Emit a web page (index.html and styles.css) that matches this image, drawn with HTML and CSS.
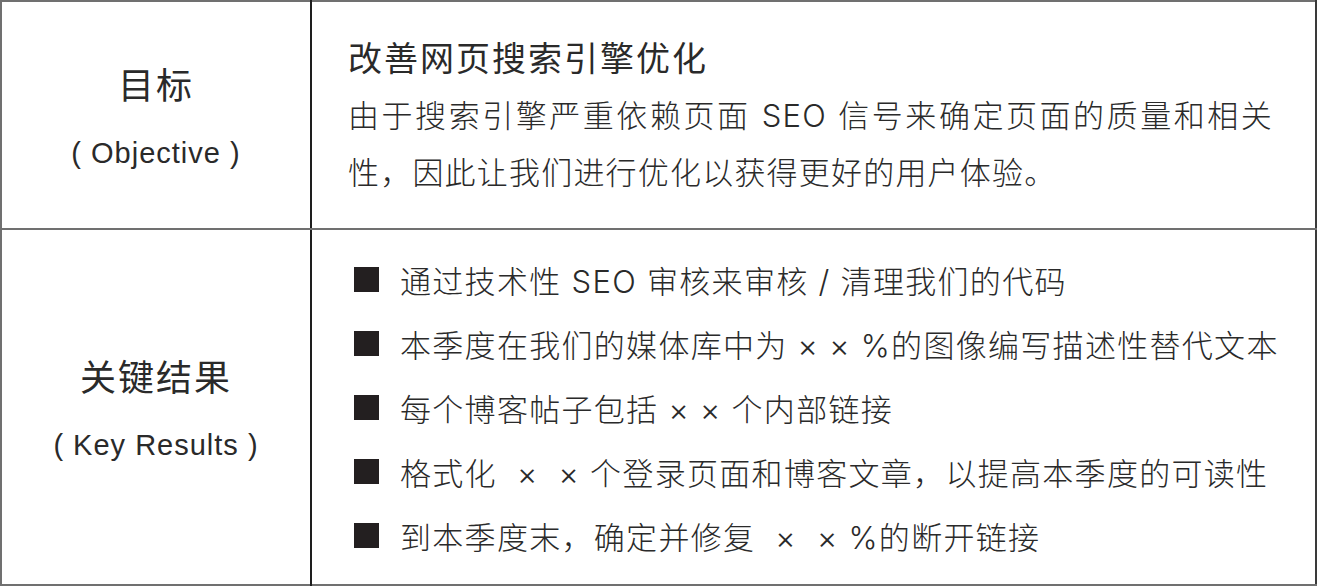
FILE: index.html
```html
<!DOCTYPE html>
<html lang="zh-CN">

<head>
    <meta charset="UTF-8">
    <meta name="viewport" content="width=device-width, initial-scale=1.0">
    <title>OKR 示例</title>
    <link rel="stylesheet" href="styles.css">
</head>

<body>
    <table class="okr">
        <colgroup>
            <col class="okr-col-label">
            <col>
        </colgroup>

        <!-- 目标 -->
        <tr class="okr-row-objective">
            <th class="okr-label">
                <div class="okr-label-title">目标</div>
                <div class="okr-label-sub">( Objective )</div>
            </th>
            <td class="okr-body">
                <div class="okr-objective">
                    <h2 class="okr-title">改善网页搜索引擎优化</h2>
                    <p class="okr-text">由于搜索引擎严重依赖页面 SEO 信号来确定页面的质量和相关性，因此让我们进行优化以获得更好的用户体验。</p>
                </div>
            </td>
        </tr>

        <!-- 关键结果 -->
        <tr class="okr-row-results">
            <th class="okr-label">
                <div class="okr-label-title">关键结果</div>
                <div class="okr-label-sub">( Key Results )</div>
            </th>
            <td class="okr-body">
                <ul class="okr-list">
                    <li><span class="okr-bullet"></span>通过技术性 SEO 审核来审核 / 清理我们的代码</li>
                    <li><span class="okr-bullet"></span>本季度在我们的媒体库中为 × × %的图像编写描述性替代文本</li>
                    <li><span class="okr-bullet"></span>每个博客帖子包括 × × 个内部链接</li>
                    <li><span class="okr-bullet"></span>格式化  ×  × 个登录页面和博客文章，以提高本季度的可读性</li>
                    <li><span class="okr-bullet"></span>到本季度末，确定并修复  ×  × %的断开链接</li>
                </ul>
            </td>
        </tr>
    </table>
</body>

</html>
```

FILE: styles.css
```css
html,
body {
    margin: 0;
    background: #ffffff;
}

body {
    font-family: "Liberation Sans", "Noto Sans CJK SC", sans-serif;
    color: #2a2a2a;
}

.okr {
    width: 1317px;
    border-collapse: collapse;
    table-layout: fixed;
    border: 2px solid #707070;
    border-right-color: #3a3a3a;
}

.okr-col-label {
    width: 310px;
}

.okr-row-objective {
    height: 228px;
}

.okr-row-results {
    height: 356px;
}

.okr-row-objective td,
.okr-row-objective th {
    border-bottom: 2px solid #707070;
}

/* Linkerkolom met labels */
.okr-label {
    border-right: 2px solid #1e1e1e;
    text-align: center;
    vertical-align: middle;
    font-weight: normal;
    padding: 10px 0 0 0;
}

.okr-label-title {
    font-size: 36px;
    letter-spacing: 2px;
    line-height: 66px;
}

.okr-label-sub {
    font-size: 29px;
    letter-spacing: 1px;
    line-height: 66px;
}

.okr-body {
    vertical-align: middle;
    padding: 0 0 0 36px;
    font-family: Inter, "Noto Sans CJK SC", sans-serif;
}

.okr-title {
    margin: 0;
    font-size: 34px;
    letter-spacing: 2px;
    line-height: 57px;
    font-weight: normal;
}

.okr-text {
    margin: 0;
    width: 925px;
    font-size: 31px;
    letter-spacing: 1.2px;
    line-height: 57px;
    font-weight: 300;
    text-align: justify;
}

.okr-list {
    list-style: none;
    margin: 0;
    padding: 0 0 0 6px;
}

.okr-list li {
    display: flex;
    align-items: center;
    height: 64px;
    font-size: 31px;
    letter-spacing: 1.3px;
    font-weight: 300;
    white-space: pre;
}

.okr-bullet {
    flex: none;
    width: 25px;
    height: 25px;
    margin-right: 21px;
    background: #231f20;
}
```
